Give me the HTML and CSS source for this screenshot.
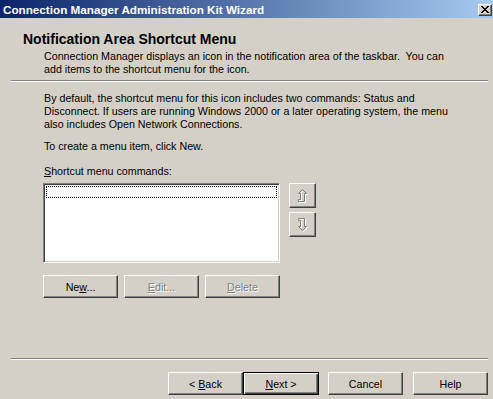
FILE: index.html
```html
<!DOCTYPE html>
<html lang="en">
<head>
    <meta charset="UTF-8">
    <title>Connection Manager Administration Kit Wizard</title>
    <link rel="stylesheet" href="styles.css">
</head>
<body>
    <div class="titlebar">
        <span>Connection Manager Administration Kit Wizard</span>
        <div class="close">
            <svg width="8" height="7" viewBox="0 0 8 7"><path d="M0 0 L7 7 M1 0 L8 7 M7 0 L0 7 M8 0 L1 7" stroke="#000" stroke-width="1"/></svg>
        </div>
    </div>

    <div class="header">
        <h3>Notification Area Shortcut Menu</h3>
        <p>Connection Manager displays an icon in the notification area of the taskbar.&nbsp; You can<br>add items to the shortcut menu for the icon.</p>
    </div>
    <div class="sep top"></div>

    <div class="content">
        <p>By default, the shortcut menu for this icon includes two commands: Status and<br>Disconnect. If users are running Windows 2000 or a later operating system, the menu<br>also includes Open Network Connections.</p>
        <p class="gap first">To create a menu item, click New.</p>
        <p class="gap"><u>S</u>hortcut menu commands:</p>

        <div class="listRow">
            <div class="listbox">
                <div class="focus"></div>
            </div>
            <div class="arrows">
                <div class="btn arrow">
                    <svg width="11" height="15" viewBox="0 0 11 15">
                        <path d="M5.5 1.5 L9.5 5.5 L7.5 5.5 L7.5 13.5 L1.5 13.5 L1.5 11.5 L3.5 11.5 L3.5 5.5 L1.5 5.5 Z" fill="none" stroke="#fff"/>
                        <path d="M4.5 0.5 L8.5 4.5 L6.5 4.5 L6.5 12.5 L0.5 12.5 L0.5 10.5 L2.5 10.5 L2.5 4.5 L0.5 4.5 Z" fill="none" stroke="#808080"/>
                    </svg>
                </div>
                <div class="btn arrow">
                    <svg width="11" height="15" viewBox="0 0 11 15">
                        <path d="M1.5 1.5 L7.5 1.5 L7.5 9.5 L9.5 9.5 L5.5 13.5 L1.5 9.5 L3.5 9.5 L3.5 3.5 L1.5 3.5 Z" fill="none" stroke="#fff"/>
                        <path d="M0.5 0.5 L6.5 0.5 L6.5 8.5 L8.5 8.5 L4.5 12.5 L0.5 8.5 L2.5 8.5 L2.5 2.5 L0.5 2.5 Z" fill="none" stroke="#808080"/>
                    </svg>
                </div>
            </div>
        </div>

        <div class="editRow">
            <div class="btn"><span>Ne<u>w</u>...</span></div>
            <div class="btn disabled"><span><u>E</u>dit...</span></div>
            <div class="btn disabled"><span><u>D</u>elete</span></div>
        </div>
    </div>

    <div class="sep bottom"></div>

    <div class="footer">
        <div class="btn"><span>&lt; <u>B</u>ack</span></div>
        <div class="btn default"><span><u>N</u>ext &gt;</span></div>
        <div class="btn cancel"><span>Cancel</span></div>
        <div class="btn help"><span>Help</span></div>
    </div>
</body>
</html>
```

FILE: styles.css
```css
*{padding: 0; margin: 0; box-sizing: border-box;}
body{width: 493px; height: 399px; overflow: hidden; background: #d4d0c8; color: #000; font: 10.7px "Liberation Sans", Arial, sans-serif;}
u{text-decoration: underline; text-underline-offset: 1px;}

.titlebar{height: 18px; display: flex; align-items: center; justify-content: space-between; padding: 0 1px 0 3px; color: #fff; font-weight: bold; font-size: 11.7px; background: linear-gradient(to right, #0a246a, #a6caf0);}
.titlebar .close{width: 14px; height: 12px; margin-top: 1px; display: flex; align-items: center; justify-content: center; background: #d4d0c8; border: 1px solid; border-color: #fff #404040 #404040 #fff; box-shadow: inset -1px -1px #808080;}

.header{height: 62px; padding: 12px 0 0 23px;}
.header h3{font-size: 14px; line-height: 18px; font-weight: bold;}
.header p{padding-left: 21px; line-height: 13px; margin-top: 2px;}

.sep{height: 2px; margin: 0 5px 0 11px; border-top: 1px solid #808080; border-bottom: 1px solid #fff;}

.content{padding: 10px 0 0 44px; height: 276px;}
.content p{line-height: 13px;}
.content .gap{margin-top: 12px;}
.content .first{margin-top: 9px;}

.listRow{display: flex; margin-top: 5px; margin-left: -1px;}
.listbox{width: 237px; height: 80px; background: #fff; border: 1px solid; border-color: #808080 #fff #fff #808080; box-shadow: inset 1px 1px #404040, inset -1px -1px #d4d0c8; padding: 2px;}
.listbox .focus{height: 12px; border: 1px dotted #000;}
.arrows{display: flex; flex-direction: column; gap: 4px; margin-left: 9px;}

.btn{width: 75px; height: 23px; display: flex; align-items: center; justify-content: center; background: #d4d0c8; border: 1px solid; border-color: #fff #404040 #404040 #fff; box-shadow: inset -1px -1px #808080;}
.btn.arrow{width: 27px; height: 25px; padding: 1px 0 0 1px;}
.btn.disabled{color: #808080; text-shadow: 1px 1px #fff;}
.btn.default{width: 76px; border: 1px solid #000; box-shadow: inset 1px 1px #fff, inset -1px -1px #404040, inset -2px -2px #808080;}

.editRow{display: flex; gap: 6px; margin-top: 12px; margin-left: -1px;}

.footer{display: flex; justify-content: flex-end; padding: 12px 5px 0 0;}
.footer .cancel{margin-left: 9px;}
.footer .help{margin-left: 10px;}
```
